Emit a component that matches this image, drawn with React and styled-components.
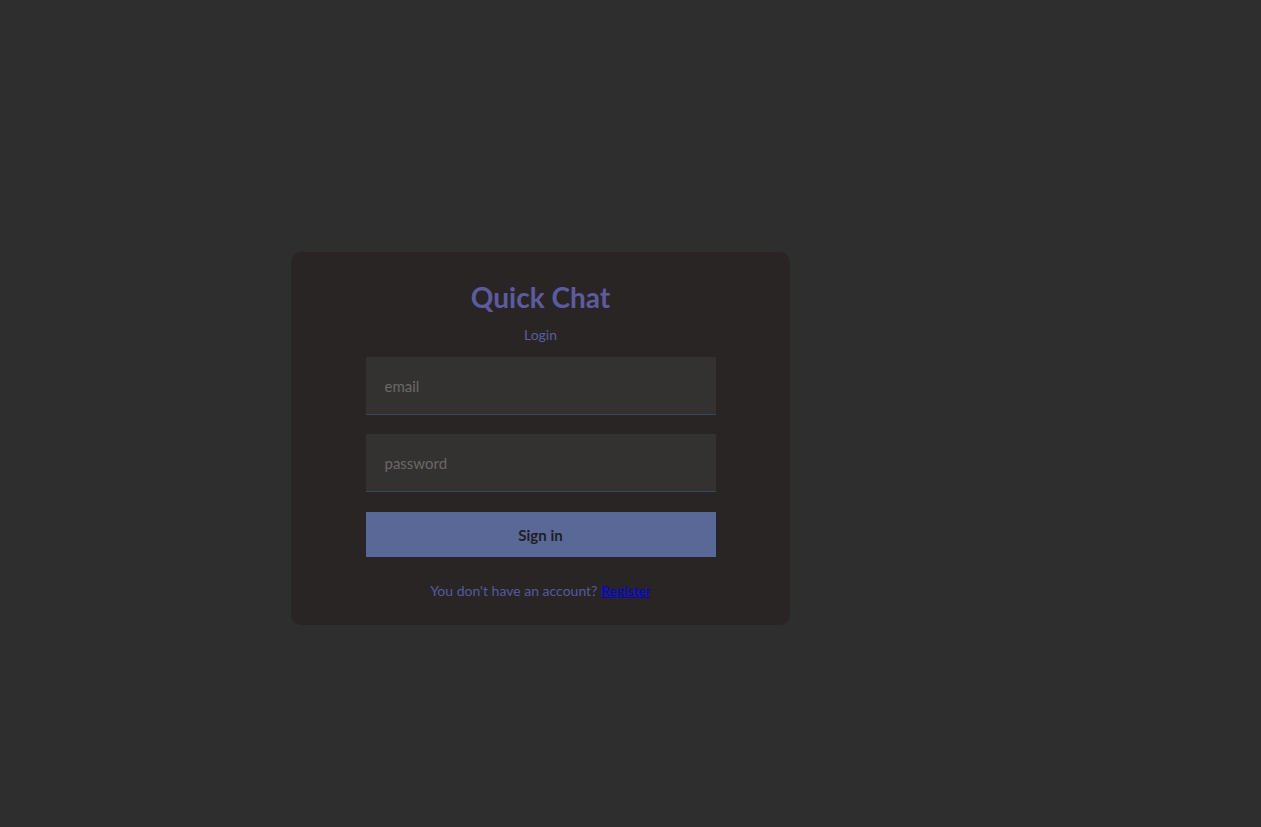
import React from "react";
import styled, { createGlobalStyle } from "styled-components";

const GlobalStyle = createGlobalStyle`
  html, body {
    margin: 0;
    padding: 0;
    background-color: #2e2e2e;
    font-family: Lato, "Noto Sans", sans-serif;
  }
`;

const App = () => {
  return (
    <>
      <GlobalStyle />
      <Page>
        <Card>
          <Title>Quick Chat</Title>
          <SubTitle>Login</SubTitle>
          <Form onSubmit={(e) => e.preventDefault()}>
            <Input type="email" placeholder="email" />
            <Input type="password" placeholder="password" />
            <Button type="submit">Sign in</Button>
          </Form>
          <Footer>
            You don't have an account? <a href="#register">Register</a>
          </Footer>
        </Card>
      </Page>
    </>
  );
};
export default App;

const Page = styled.div`
  min-height: 827px;
  box-sizing: border-box;
  padding: 252px 0 0 291px;
`;
const Card = styled.div`
  width: 499px;
  box-sizing: border-box;
  background-color: #292525;
  border-radius: 10px;
  padding: 29px 0 26px;
  display: flex;
  flex-direction: column;
  align-items: center;
`;
const Title = styled.span`
  color: #5d5ba0;
  font-size: 28px;
  font-weight: 700;
  line-height: 32px;
`;
const SubTitle = styled.span`
  color: #5d5ba0;
  font-size: 14px;
  line-height: 18px;
  margin-top: 13px;
`;
const Form = styled.form`
  display: flex;
  flex-direction: column;
  gap: 19px;
  width: 350px;
  margin-top: 13px;
`;
const Input = styled.input`
  height: 58px;
  box-sizing: border-box;
  padding: 0 19px;
  border: none;
  border-bottom: 1px solid #3a4660;
  background-color: #343231;
  color: #cfcfcf;
  font-family: inherit;
  font-size: 15px;
  outline: none;
  &::placeholder {
    color: #6b6868;
  }
`;
const Button = styled.button`
  height: 45px;
  margin-top: 1px;
  border: none;
  background-color: #5a6898;
  color: #1e1e24;
  font-family: inherit;
  font-size: 15px;
  font-weight: 700;
  cursor: pointer;
`;
const Footer = styled.p`
  margin: 26px 0 0;
  color: #5a58a0;
  font-size: 14px;
  line-height: 16px;
  a {
    color: #0000ee;
  }
`;
